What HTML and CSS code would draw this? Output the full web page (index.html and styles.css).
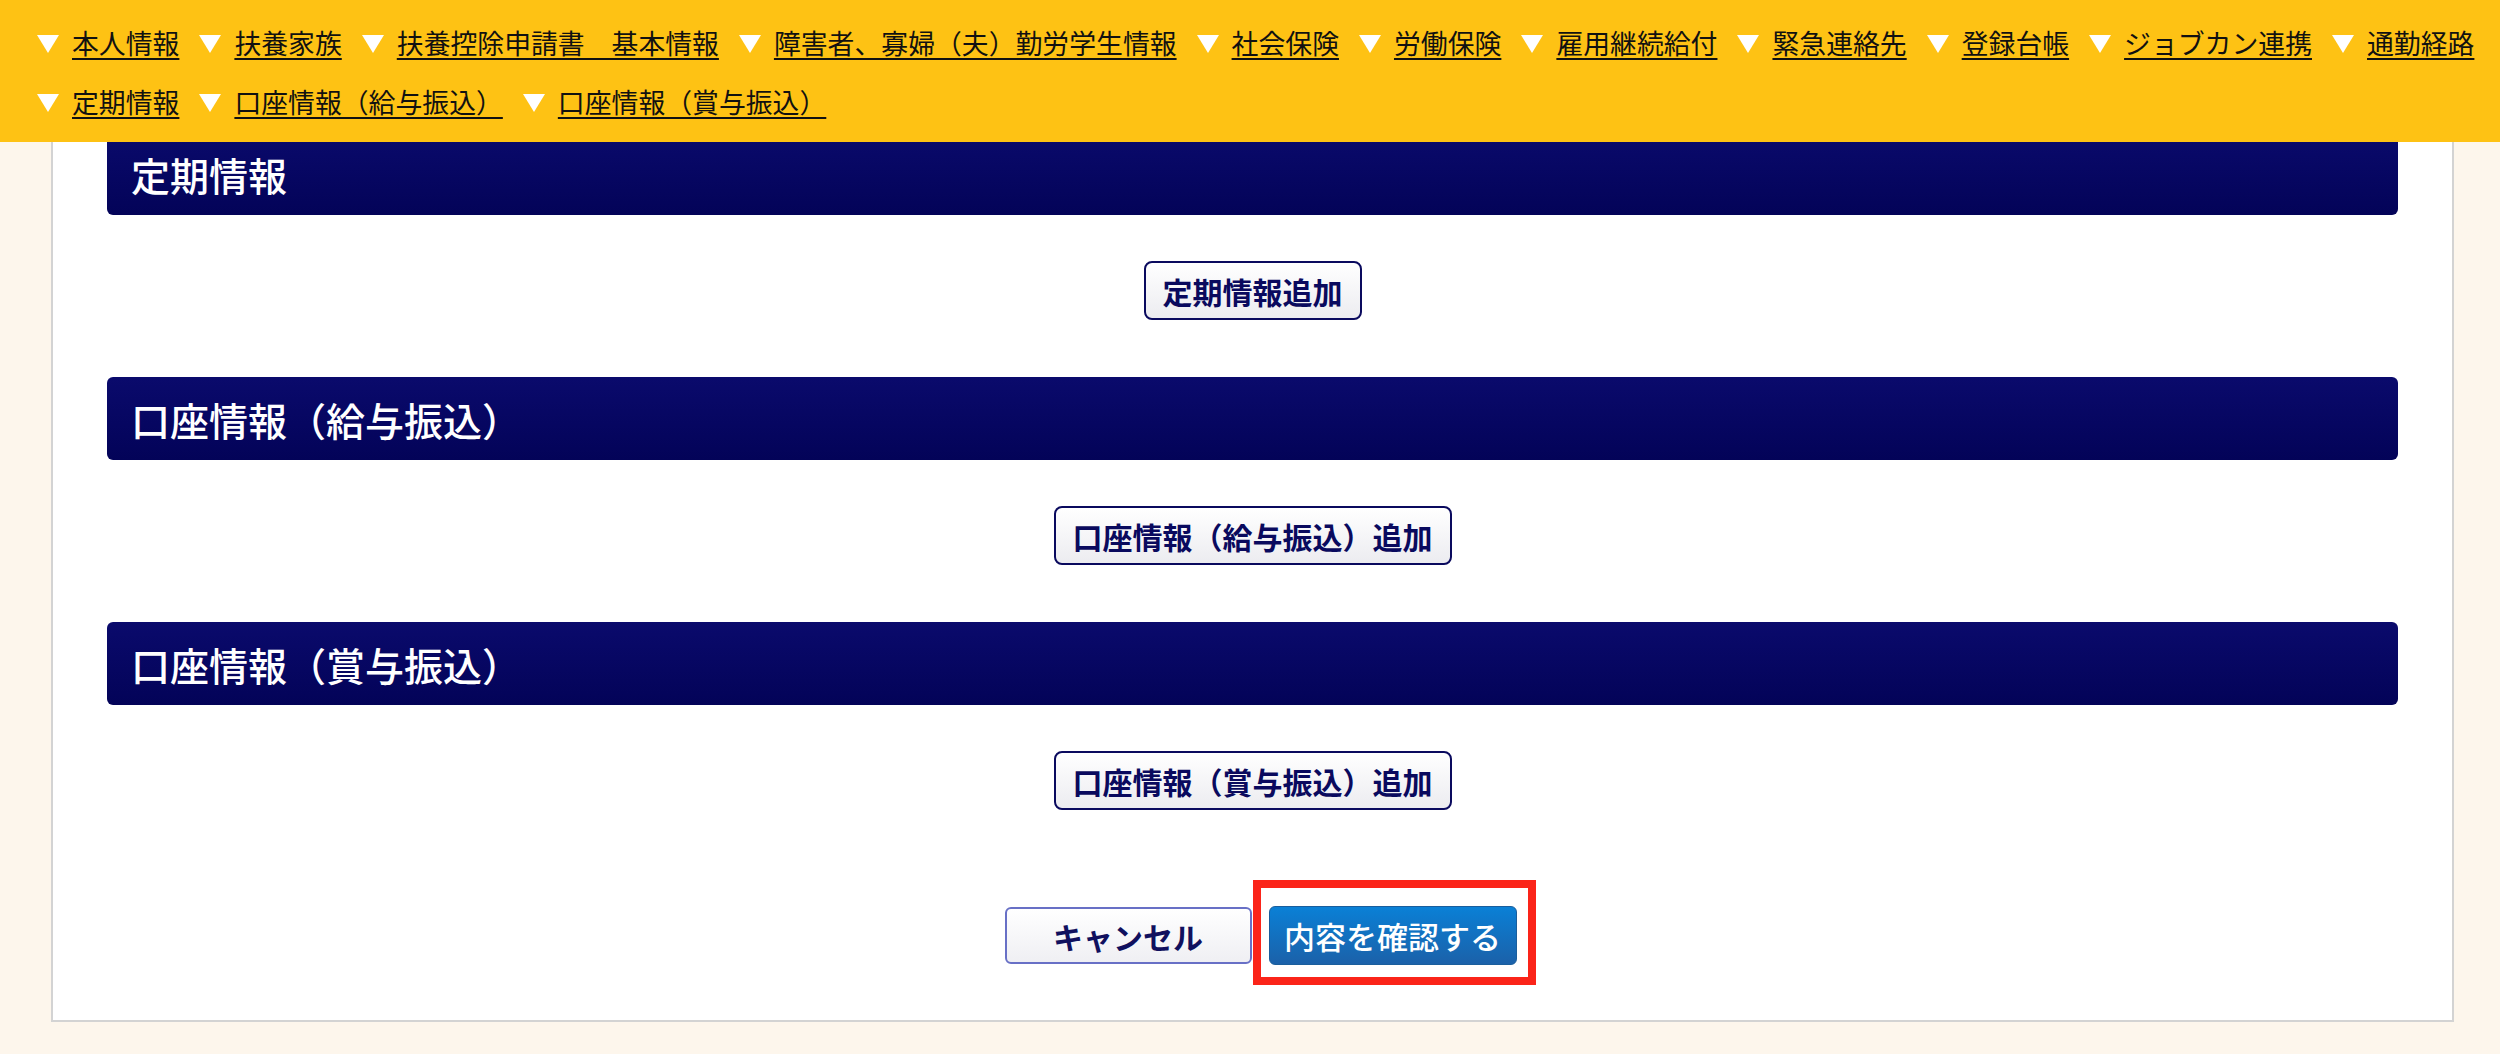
FILE: index.html
```html
<!DOCTYPE html>
<html lang="ja">
<head>
    <meta charset="UTF-8">
    <meta name="viewport" content="width=device-width, initial-scale=1.0">
    <title>従業員情報 - 入力</title>
    <link rel="stylesheet" href="styles.css">
</head>
<body>
    <nav class="anchor-nav">
        <a href="#honnin" class="anchor-link"><span class="tri"></span><span class="anchor-text">本人情報</span></a>
        <a href="#fuyou" class="anchor-link"><span class="tri"></span><span class="anchor-text">扶養家族</span></a>
        <a href="#koujo" class="anchor-link"><span class="tri"></span><span class="anchor-text">扶養控除申請書　基本情報</span></a>
        <a href="#shougai" class="anchor-link"><span class="tri"></span><span class="anchor-text">障害者、寡婦（夫）勤労学生情報</span></a>
        <a href="#shakai" class="anchor-link"><span class="tri"></span><span class="anchor-text">社会保険</span></a>
        <a href="#roudou" class="anchor-link"><span class="tri"></span><span class="anchor-text">労働保険</span></a>
        <a href="#koyou" class="anchor-link"><span class="tri"></span><span class="anchor-text">雇用継続給付</span></a>
        <a href="#kinkyu" class="anchor-link"><span class="tri"></span><span class="anchor-text">緊急連絡先</span></a>
        <a href="#touroku" class="anchor-link"><span class="tri"></span><span class="anchor-text">登録台帳</span></a>
        <a href="#jobcan" class="anchor-link"><span class="tri"></span><span class="anchor-text">ジョブカン連携</span></a>
        <a href="#tsukin" class="anchor-link"><span class="tri"></span><span class="anchor-text">通勤経路</span></a>
        <a href="#teiki" class="anchor-link"><span class="tri"></span><span class="anchor-text">定期情報</span></a>
        <a href="#kyuyo" class="anchor-link"><span class="tri"></span><span class="anchor-text">口座情報（給与振込）</span></a>
        <a href="#shoyo" class="anchor-link"><span class="tri"></span><span class="anchor-text">口座情報（賞与振込）</span></a>
    </nav>

    <main class="page">
        <div class="panel">
            <section class="section" id="teiki">
                <h2 class="section-title">定期情報</h2>
                <div class="section-body">
                    <button type="button" class="add-btn">定期情報追加</button>
                </div>
            </section>

            <section class="section" id="kyuyo">
                <h2 class="section-title">口座情報（給与振込）</h2>
                <div class="section-body">
                    <button type="button" class="add-btn">口座情報（給与振込）追加</button>
                </div>
            </section>

            <section class="section" id="shoyo">
                <h2 class="section-title">口座情報（賞与振込）</h2>
                <div class="section-body">
                    <button type="button" class="add-btn">口座情報（賞与振込）追加</button>
                </div>
            </section>

            <div class="form-actions">
                <button type="button" class="cancel-btn">キャンセル</button>
                <div class="highlight">
                    <button type="submit" class="confirm-btn">内容を確認する</button>
                </div>
            </div>
        </div>
    </main>
</body>
</html>
```

FILE: styles.css
```css
* {
    margin: 0;
    padding: 0;
    box-sizing: border-box;
    font-family: 'Noto Sans CJK JP', 'Noto Sans', sans-serif;
}

body {
    background: #fdf6ec;
    min-height: 100vh;
}

/* anchor menu stays on top while scrolling */
.anchor-nav {
    position: fixed;
    top: 0;
    left: 0;
    right: 0;
    z-index: 100;
    height: 142px;
    background: #fec214;
    padding: 14px 20px 10px 37px;
    display: flex;
    flex-wrap: wrap;
    align-content: flex-start;
    column-gap: 20px;
}

.anchor-link {
    display: inline-flex;
    align-items: center;
    gap: 13px;
    height: 59px;
    color: #111;
    text-decoration: none;
}

.tri {
    width: 0;
    height: 0;
    border-left: 11px solid transparent;
    border-right: 11px solid transparent;
    border-top: 18px solid #fff;
}

.anchor-text {
    font-size: 26.85px;
    line-height: 1;
    text-decoration: underline;
    text-decoration-thickness: 2px;
    text-underline-offset: 4px;
}

.page {
    padding: 110px 46px 40px 51px;
}

.panel {
    background: #fff;
    border: 2px solid #d3d3d3;
    padding: 20px 54px 55px;
}

.section-title {
    height: 83px;
    display: flex;
    align-items: center;
    padding-left: 24px;
    background: linear-gradient(#0a0a6c, #030358);
    border-radius: 6px;
    color: #fff;
    font-size: 39px;
    font-weight: 500;
}

.section-body {
    display: flex;
    justify-content: center;
    margin: 46px 0 57px;
}

.add-btn {
    height: 59px;
    padding: 0 17px;
    background: linear-gradient(#ffffff, #ececf0);
    border: 2px solid #0a0a5e;
    border-radius: 8px;
    color: #0a0a5e;
    font-size: 30px;
    font-weight: 700;
    cursor: pointer;
}

.form-actions {
    display: flex;
    justify-content: center;
    align-items: center;
    gap: 17px;
    margin-top: 96px;
    padding-left: 16px;
}

.cancel-btn {
    width: 247px;
    height: 57px;
    background: linear-gradient(#ffffff, #efeff3);
    border: 2px solid #6870c6;
    border-radius: 6px;
    color: #10105e;
    font-size: 30px;
    font-weight: 700;
    cursor: pointer;
}

.highlight {
    position: relative;
}

/* red annotation frame */
.highlight::after {
    content: '';
    position: absolute;
    top: -26px;
    bottom: -20px;
    left: -16px;
    right: -19px;
    border: 8px solid #fb2419;
    pointer-events: none;
}

.confirm-btn {
    display: block;
    width: 248px;
    height: 59px;
    background: linear-gradient(#0a80d6, #1b61a9);
    border: 1px solid #1a5e9c;
    border-radius: 6px;
    color: #fff;
    font-size: 31px;
    font-weight: 500;
    cursor: pointer;
}
```
